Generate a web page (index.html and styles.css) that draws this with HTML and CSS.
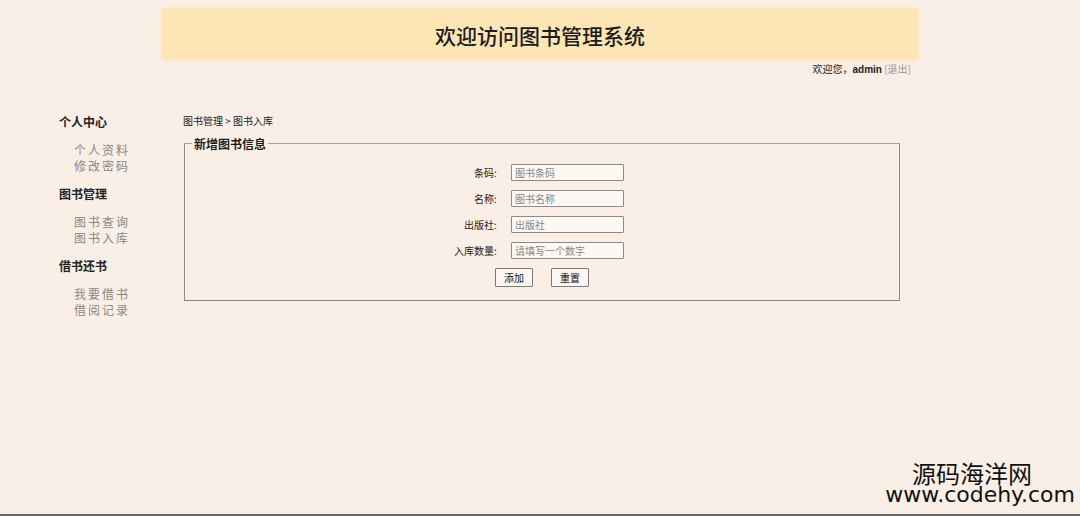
FILE: index.html
```html
<!DOCTYPE html>
<html lang="zh">
<head>
<meta charset="utf-8">
<title>图书管理系统</title>
<link rel="stylesheet" href="styles.css">
</head>
<body>
<div class="page">
  <header class="banner">
    <h1 class="title">欢迎访问图书管理系统</h1>
  </header>
  <div class="userbar">欢迎您，<b>admin</b> <a class="logout">[退出]</a></div>
  <div class="main">
    <nav class="sidebar">
      <div class="group">
        <div class="group-title">个人中心</div>
        <ul class="menu">
          <li>个人资料</li>
          <li>修改密码</li>
        </ul>
      </div>
      <div class="group">
        <div class="group-title">图书管理</div>
        <ul class="menu">
          <li>图书查询</li>
          <li>图书入库</li>
        </ul>
      </div>
      <div class="group">
        <div class="group-title">借书还书</div>
        <ul class="menu">
          <li>我要借书</li>
          <li>借阅记录</li>
        </ul>
      </div>
    </nav>
    <section class="content">
      <div class="crumb">图书管理 &gt; 图书入库</div>
      <fieldset class="box">
        <legend class="legend">新增图书信息</legend>
        <table class="form">
          <tr><td class="lbl">条码:</td><td><input class="inp" placeholder="图书条码"></td></tr>
          <tr><td class="lbl">名称:</td><td><input class="inp" placeholder="图书名称"></td></tr>
          <tr><td class="lbl">出版社:</td><td><input class="inp" placeholder="出版社"></td></tr>
          <tr><td class="lbl">入库数量:</td><td><input class="inp" placeholder="请填写一个数字"></td></tr>
        </table>
        <div class="actions">
          <button class="btn">添加</button>
          <button class="btn">重置</button>
        </div>
      </fieldset>
    </section>
  </div>
  <div class="mark">
    <div class="mark-cn">源码海洋网</div>
    <div class="mark-en">www.codehy.com</div>
  </div>
</div>
</body>
</html>
```

FILE: styles.css
```css
html, body {
  margin: 0;
  padding: 0;
  background: #faefe7;
}
body {
  font-family: "Noto Sans CJK SC", "Noto Sans", sans-serif;
  color: #222;
  width: 1080px;
  height: 516px;
  overflow: hidden;
}
.page {
  position: relative;
  height: 516px;
  padding-top: 9px;
  border-bottom: 2px solid #6d6a66;
  box-sizing: border-box;
}
.banner {
  width: 756px;
  height: 51px;
  margin: 0 auto;
  background: #fde5b5;
  border-radius: 3px;
  box-shadow: 0 0 4px 2px #fbe9c7;
  display: flex;
  align-items: center;
  justify-content: center;
}
.title {
  margin: 0;
  font-size: 21px;
  font-weight: 500;
  color: #1c1c1c;
}
.userbar {
  width: 756px;
  margin: 1px auto 0;
  text-align: right;
  font-size: 10px;
  line-height: 16px;
  color: #222;
  padding-right: 7px;
  box-sizing: border-box;
}
.userbar b {
  font-family: "Liberation Sans", sans-serif;
  font-size: 10px;
}
.logout {
  color: #999;
}
.main {
  display: flex;
  padding-left: 59px;
  margin-top: 33px;
}
.sidebar {
  width: 124px;
}
.group {
  margin-bottom: 9px;
}
.group-title {
  font-size: 12px;
  font-weight: bold;
  line-height: 22px;
  margin-bottom: 9px;
}
.menu {
  list-style: none;
  margin: 0;
  padding: 0 0 0 15px;
  font-size: 12px;
  line-height: 16px;
  color: #8a8684;
  letter-spacing: 2px;
}
.content {
  width: 717px;
}
.crumb {
  font-size: 10px;
  line-height: 20px;
  color: #222;
}
.box {
  margin: 4px 0 0 1px;
  padding: 7px 0 12px;
  border: 1px solid #8c8784;
  border-top-color: #a9a4a0;
  box-sizing: border-box;
  height: 166px;
}
.legend {
  font-size: 12px;
  font-weight: bold;
  padding: 0 2px;
  margin-left: 7px;
  color: #1c1c1c;
}
.form {
  margin: 0 auto;
  border-collapse: collapse;
  position: relative;
  left: -3px;
}
.form td {
  padding: 0;
  height: 26px;
}
.lbl {
  font-size: 10px;
  text-align: right;
  padding-right: 14px !important;
  color: #222;
}
.inp {
  width: 113px;
  height: 17px;
  box-sizing: border-box;
  border: 1px solid #8e8a86;
  border-radius: 1px;
  background: #fdf8f4;
  font-family: "Noto Sans CJK SC", sans-serif;
  font-size: 10px;
  padding: 0 3px;
  display: block;
}
.inp::placeholder {
  color: #8a8684;
}
.actions {
  display: flex;
  justify-content: center;
  gap: 18px;
  margin-top: 5px;
}
.btn {
  width: 38px;
  height: 19px;
  font-family: "Noto Sans CJK SC", sans-serif;
  font-size: 10px;
  background: #fbf7f4;
  border: 1px solid #7e7a77;
  border-radius: 1px;
  padding: 0;
  color: #111;
}
.mark {
  position: absolute;
  right: 5px;
  bottom: 8px;
  text-align: right;
  color: #111;
}
.mark-cn {
  font-family: "Noto Sans CJK SC", sans-serif;
  font-size: 24px;
  line-height: 23px;
  margin-right: 43px;
}
.mark-en {
  font-family: "DejaVu Sans", sans-serif;
  font-size: 22px;
  line-height: 22px;
}
```
